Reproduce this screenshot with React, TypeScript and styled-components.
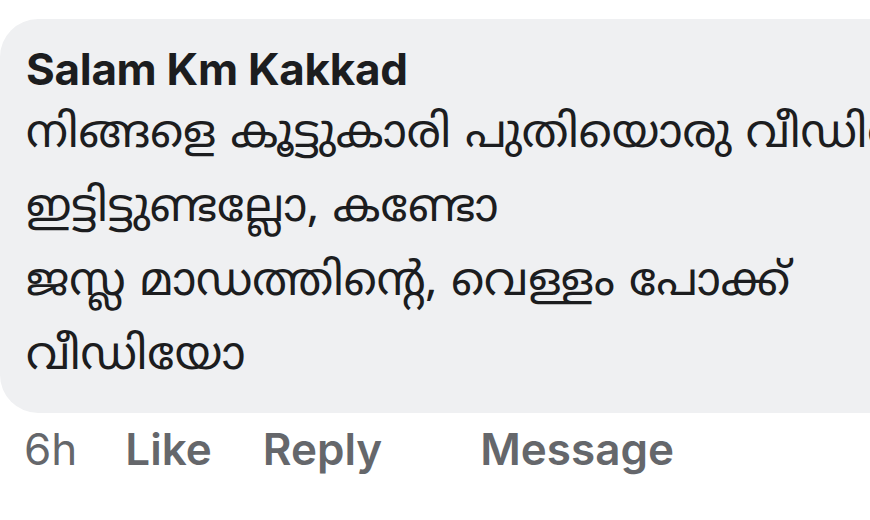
import React from "react";
import styled, { createGlobalStyle } from "styled-components";

const GlobalStyle = createGlobalStyle`
  html, body {
    margin: 0;
    padding: 0;
    background: #ffffff;
    overflow: hidden;
  }
  body {
    font-family: "Inter", "Noto Sans", "Liberation Sans", sans-serif;
  }
`;

const Page = styled.div`
  width: 870px;
  height: 520px;
  overflow: hidden;
  padding-top: 19px;
  box-sizing: border-box;
`;

// the bubble runs on past the right edge of the screen
const Bubble = styled.div`
  width: 1100px;
  height: 394px;
  background: #eff0f2;
  border-radius: 38px;
  padding: 20px 26px;
  box-sizing: border-box;
`;

const Author = styled.div`
  font-size: 44px;
  font-weight: 700;
  color: #1c1d1f;
  line-height: 60px;
  letter-spacing: -0.3px;
`;

const Body = styled.div`
  font-size: 46px;
  color: #1c1d1f;
  line-height: 74px;
  white-space: nowrap;
  font-family: "Noto Sans Malayalam", "Noto Sans", "Inter", sans-serif;
`;

const Actions = styled.div`
  display: flex;
  align-items: baseline;
  padding: 6px 0 0 24px;
  font-size: 44px;
  line-height: 60px;
  color: #65676b;
`;

const Action = styled.span<{ $bold?: boolean; $gap: number }>`
  font-weight: ${(p) => (p.$bold ? 600 : 400)};
  margin-right: ${(p) => p.$gap}px;
`;

const lines = [
  "നിങ്ങളെ കൂട്ടുകാരി പുതിയൊരു വീഡിയോ",
  "ഇട്ടിട്ടുണ്ടല്ലോ, കണ്ടോ",
  "ജസ്ല മാഡത്തിന്റെ, വെള്ളം പോക്ക്",
  "വീഡിയോ",
];

const App: React.FC = () => (
  <>
    <GlobalStyle />
    <Page>
      <Bubble>
        <Author>Salam Km Kakkad</Author>
        <Body>
          {lines.map((l) => (
            <div key={l}>{l}</div>
          ))}
        </Body>
      </Bubble>
      <Actions>
        <Action $gap={48}>6h</Action>
        <Action $bold $gap={51}>Like</Action>
        <Action $bold $gap={98}>Reply</Action>
        <Action $bold $gap={0}>Message</Action>
      </Actions>
    </Page>
  </>
);

export default App;
